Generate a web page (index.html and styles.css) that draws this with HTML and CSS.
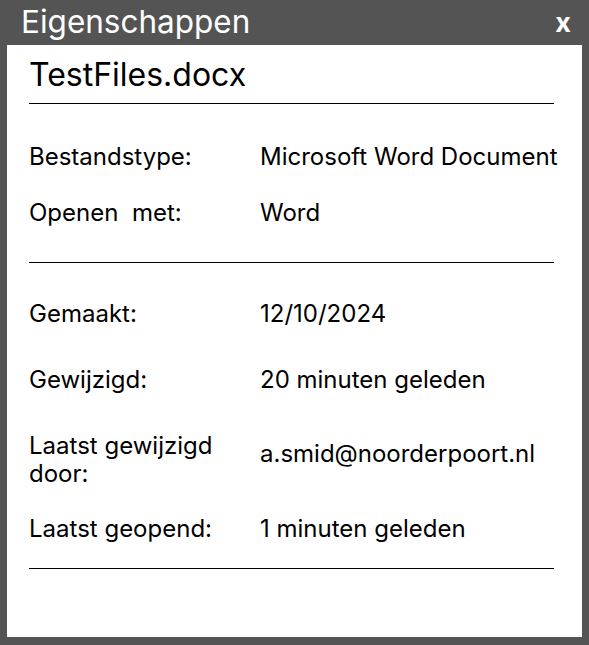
FILE: index.html
```html
<!DOCTYPE html>
<html lang="nl">
<head>
<meta charset="utf-8">
<title>Eigenschappen</title>
<link rel="stylesheet" href="styles.css">
</head>
<body>
<div class="window">
  <div class="titlebar">
    <span class="title">Eigenschappen</span>
    <span class="close">x</span>
  </div>
  <div class="panel">
    <h1 class="filename">TestFiles.docx</h1>
    <div class="section first">
      <div class="row"><span class="label">Bestandstype:</span><span class="value">Microsoft Word Document</span></div>
      <div class="row"><span class="label">Openen&nbsp; met:</span><span class="value">Word</span></div>
    </div>
    <div class="section second">
      <div class="row"><span class="label">Gemaakt:</span><span class="value">12/10/2024</span></div>
      <div class="row"><span class="label">Gewijzigd:</span><span class="value">20 minuten geleden</span></div>
      <div class="row wrap"><span class="label">Laatst gewijzigd door:</span><span class="value">a.smid@noorderpoort.nl</span></div>
      <div class="row"><span class="label">Laatst geopend:</span><span class="value">1 minuten geleden</span></div>
    </div>
  </div>
</div>
</body>
</html>
```

FILE: styles.css
```css
* { box-sizing: border-box; }
html, body {
  margin: 0;
  padding: 0;
  background: #545454;
}
body {
  font-family: Inter, "Noto Sans", sans-serif;
  width: 589px;
  height: 645px;
  overflow: hidden;
}
.window {
  display: flex;
  flex-direction: column;
  height: 645px;
}
.titlebar {
  height: 45px;
  display: flex;
  align-items: center;
  justify-content: space-between;
  padding: 0 18px 0 21px;
  color: #ffffff;
}
.title {
  font-size: 31.5px;
  line-height: 1;
  margin-top: -2px;
}
.close {
  font-size: 27px;
  font-weight: 700;
  line-height: 1;
}
.panel {
  background: #ffffff;
  margin: 0 7px;
  height: 592px;
  padding: 0 28px 0 22px;
}
.filename {
  margin: 0;
  font-weight: 400;
  font-size: 32px;
  line-height: 36px;
  padding-top: 12px;
  padding-bottom: 10px;
  border-bottom: 1px solid #000;
  color: #000;
}
.section {
  border-bottom: 1px solid #000;
}
.row {
  display: grid;
  grid-template-columns: 231px 1fr;
  align-items: center;
  font-size: 24px;
  line-height: 28px;
  color: #000;
}
.label { padding-right: 12px; }
.value { white-space: nowrap; }
.row.wrap { align-items: start; }
.row.wrap .value { margin-top: 8px; }
.first { padding: 39px 0 35px; }
.first .row + .row { margin-top: 28px; }
.second { padding: 37px 0 25px; }
.second .row + .row { margin-top: 38px; }
.second .row.wrap + .row { margin-top: 27px; }
```
